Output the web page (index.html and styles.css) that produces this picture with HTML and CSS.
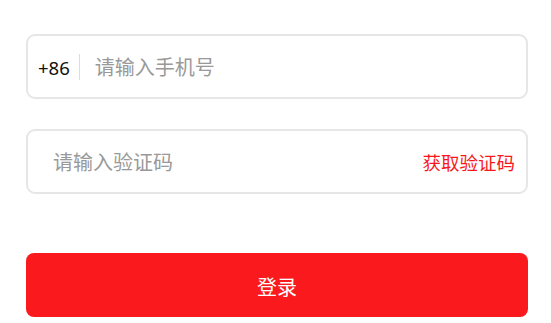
FILE: index.html
```html
<!DOCTYPE html>
<html lang="zh">
<head>
<meta charset="utf-8">
<link rel="stylesheet" href="styles.css">
</head>
<body>
<div class="form">
  <div class="field phone">
    <span class="prefix">+86</span>
    <span class="divider"></span>
    <span class="placeholder">请输入手机号</span>
  </div>
  <div class="field code">
    <span class="placeholder">请输入验证码</span>
    <span class="get-code">获取验证码</span>
  </div>
  <div class="submit">登录</div>
</div>
</body>
</html>
```

FILE: styles.css
```css
html, body {
  margin: 0;
  padding: 0;
  background: #ffffff;
}
body {
  font-family: "Noto Sans CJK SC", "Noto Sans", sans-serif;
  width: 551px;
  height: 323px;
  overflow: hidden;
}
.form {
  padding: 34px 23px 0 26px;
  display: flex;
  flex-direction: column;
}
.field {
  box-sizing: border-box;
  height: 65px;
  border: 2px solid #e6e6e6;
  border-radius: 9px;
  display: flex;
  align-items: center;
}
.phone {
  padding-left: 10px;
}
.code {
  margin-top: 30px;
  padding: 0 11px 0 25px;
  justify-content: space-between;
}
.prefix {
  font-family: "Noto Sans", Roboto, sans-serif;
  font-size: 18.5px;
  color: #111111;
  padding-top: 1px;
}
.divider {
  width: 1px;
  height: 26px;
  background: #dddddd;
  margin: 0 15px 0 9px;
}
.placeholder {
  font-size: 20px;
  color: #999999;
}
.get-code {
  font-size: 18.5px;
  color: #f8181c;
}
.submit {
  box-sizing: border-box;
  margin-top: 59px;
  height: 64px;
  padding-top: 3px;
  border-radius: 8px;
  background: #fa1a1e;
  color: #ffffff;
  font-size: 20px;
  display: flex;
  align-items: center;
  justify-content: center;
}
```
